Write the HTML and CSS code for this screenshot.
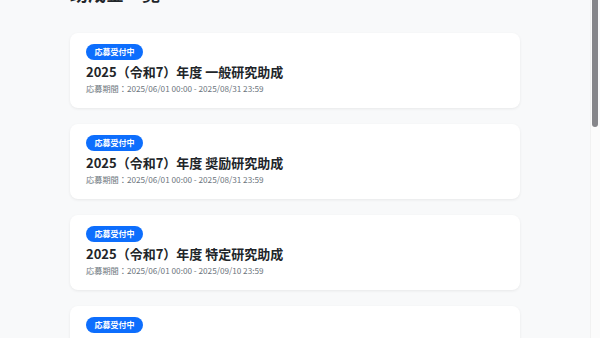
FILE: index.html
```html
<!DOCTYPE html>
<html lang="ja">
<head>
<meta charset="utf-8">
<title>助成金一覧</title>
<link rel="stylesheet" href="styles.css">
</head>
<body>
<div class="layout">
  <div class="page">
    <main class="container">
      <h1 class="page-title">助成金一覧</h1>
      <ul class="grant-list">
        <li class="card">
          <span class="badge">応募受付中</span>
          <h2 class="card-title">2025（令和7）年度 一般研究助成</h2>
          <p class="card-period">応募期間：2025/06/01 00:00 - 2025/08/31 23:59</p>
        </li>
        <li class="card">
          <span class="badge">応募受付中</span>
          <h2 class="card-title">2025（令和7）年度 奨励研究助成</h2>
          <p class="card-period">応募期間：2025/06/01 00:00 - 2025/08/31 23:59</p>
        </li>
        <li class="card">
          <span class="badge">応募受付中</span>
          <h2 class="card-title">2025（令和7）年度 特定研究助成</h2>
          <p class="card-period">応募期間：2025/06/01 00:00 - 2025/09/10 23:59</p>
        </li>
        <li class="card">
          <span class="badge">応募受付中</span>
          <h2 class="card-title">2025（令和7）年度 国際交流助成</h2>
          <p class="card-period">応募期間：2025/06/01 00:00 - 2025/09/10 23:59</p>
        </li>
      </ul>
    </main>
  </div>
  <div class="rail"><div class="rail-handle"></div></div>
</div>
</body>
</html>
```
FILE: styles.css
```css
html, body {
  margin: 0;
  padding: 0;
  height: 100%;
  overflow: hidden;
  background: #f8f9fa;
}
body {
  font-family: "Noto Sans CJK JP", "Noto Sans", sans-serif;
  color: #212529;
}
.layout {
  display: flex;
  height: 338px;
  overflow: hidden;
}
.page {
  flex: 1;
  min-width: 0;
}
.container {
  width: 450px;
  margin: 0 auto;
}
.page-title {
  margin: -17px 0 30px;
  font-size: 18px;
  line-height: 20px;
  font-weight: 700;
}
.grant-list {
  list-style: none;
  margin: 0;
  padding: 0;
  display: flex;
  flex-direction: column;
  gap: 16px;
}
.card {
  display: flex;
  flex-direction: column;
  align-items: flex-start;
  background: #fff;
  border-radius: 8px;
  box-shadow: 0 1px 3px rgba(0, 0, 0, 0.07);
  padding: 11px 16px 0;
  height: 75px;
  box-sizing: border-box;
}
.badge {
  display: block;
  background: #0d6efd;
  color: #fff;
  font-size: 8px;
  font-weight: 700;
  line-height: 16px;
  height: 16px;
  padding: 0 8.5px;
  border-radius: 8px;
}
.card-title {
  margin: 3px 0 0;
  font-size: 13px;
  line-height: 18px;
  font-weight: 700;
  color: #212529;
}
.card-period {
  margin: 1px 0 0;
  font-size: 8.2px;
  line-height: 12px;
  color: #6c757d;
}
.rail {
  flex: 0 0 10px;
  border-left: 1px solid #f1f1f1;
  box-sizing: border-box;
  background: #fbfbfb;
  padding-left: 1px;
}
.rail-handle {
  width: 6px;
  height: 127px;
  background: #86868a;
  border-radius: 0 0 3px 3px;
}
```
